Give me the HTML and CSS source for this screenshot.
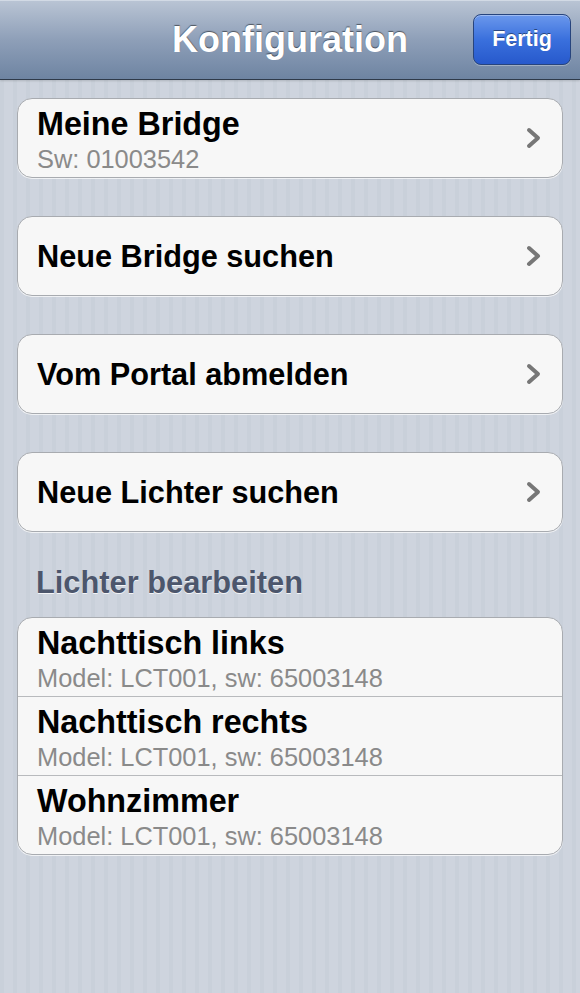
FILE: index.html
```html
<!DOCTYPE html>
<html lang="de">
  <head>
    <meta charset="UTF-8" />
    <meta name="viewport" content="width=device-width, initial-scale=1.0" />
    <title>Konfiguration</title>
    <link rel="stylesheet" href="styles.css">
  </head>
  <body>

    <!-- Navigation bar -->
    <header class="navbar">
      <span></span>
      <h1 class="nav-title">Konfiguration</h1>
      <div class="nav-right">
        <button class="done-btn">Fertig</button>
      </div>
    </header>

    <main class="content">

      <div class="group">
        <div class="row">
          <div class="row-text">
            <div class="row-title">Meine Bridge</div>
            <div class="row-sub">Sw: 01003542</div>
          </div>
          <svg class="chevron" viewBox="0 0 16 22"><polyline points="3,3 12,11 3,19" /></svg>
        </div>
      </div>

      <div class="group">
        <div class="row">
          <div class="row-title single">Neue Bridge suchen</div>
          <svg class="chevron" viewBox="0 0 16 22"><polyline points="3,3 12,11 3,19" /></svg>
        </div>
      </div>

      <div class="group">
        <div class="row">
          <div class="row-title single">Vom Portal abmelden</div>
          <svg class="chevron" viewBox="0 0 16 22"><polyline points="3,3 12,11 3,19" /></svg>
        </div>
      </div>

      <div class="group">
        <div class="row">
          <div class="row-title single">Neue Lichter suchen</div>
          <svg class="chevron" viewBox="0 0 16 22"><polyline points="3,3 12,11 3,19" /></svg>
        </div>
      </div>

      <h2 class="section-header">Lichter bearbeiten</h2>

      <div class="group group-list">
        <div class="row">
          <div class="row-text">
            <div class="row-title">Nachttisch links</div>
            <div class="row-sub">Model: LCT001, sw: 65003148</div>
          </div>
        </div>
        <div class="row">
          <div class="row-text">
            <div class="row-title">Nachttisch rechts</div>
            <div class="row-sub">Model: LCT001, sw: 65003148</div>
          </div>
        </div>
        <div class="row">
          <div class="row-text">
            <div class="row-title">Wohnzimmer</div>
            <div class="row-sub">Model: LCT001, sw: 65003148</div>
          </div>
        </div>
      </div>

    </main>
  </body>
</html>
```

FILE: styles.css
```css
:root {
  --cell-bg: #f7f7f7;
  --cell-border: #a8abb0;
  --sub: #8a8a8a;
  --header: #4c566c;
}

* {
  box-sizing: border-box;
}

body {
  margin: 0;
  min-height: 100vh;
  font-family: "Liberation Sans", Arial, sans-serif;
  color: #000;
  background-color: #cbd2dc;
  background-image: repeating-linear-gradient(90deg, #c9d0da 0, #c9d0da 4px, #ced4de 4px, #ced4de 13px);
}

/* nav bar */
.navbar {
  height: 80px;
  display: grid;
  grid-template-columns: 1fr auto 1fr;
  align-items: center;
  background: linear-gradient(#b9c4d4, #8e9fb8 50%, #6e84a2);
  border-top: 1px solid #d2dae5;
  border-bottom: 1px solid #2f3a4a;
  box-shadow: 0 1px 2px rgba(0, 0, 0, 0.15);
}

.nav-title {
  margin: 0;
  font-size: 36px;
  font-weight: bold;
  color: #fff;
  text-shadow: 0 -1px 1px rgba(0, 0, 0, 0.5);
}

.nav-right {
  display: flex;
  justify-content: flex-end;
  padding-right: 9px;
}

.done-btn {
  width: 98px;
  height: 51px;
  margin-top: -2px;
  border: 1px solid #27447d;
  border-radius: 8px;
  background: linear-gradient(#6b98ec, #3a70dd 50%, #2759cc);
  box-shadow: inset 0 1px 0 rgba(255, 255, 255, 0.35), 0 1px 0 rgba(255, 255, 255, 0.3);
  color: #fff;
  font-family: "Liberation Sans", Arial, sans-serif;
  font-size: 21.5px;
  font-weight: bold;
  text-shadow: 0 -1px 0 rgba(0, 0, 0, 0.45);
  padding: 0;
}

/* grouped table */
.content {
  padding: 18px 17px 40px;
}

.group {
  background: var(--cell-bg);
  border: 1px solid var(--cell-border);
  border-radius: 15px;
  box-shadow: 0 1px 0 rgba(255, 255, 255, 0.7);
  margin-bottom: 38px;
  overflow: hidden;
}

.row {
  height: 78px;
  display: flex;
  align-items: center;
  justify-content: space-between;
  padding: 0 20px 0 19px;
}

.group-list .row + .row {
  border-top: 1px solid #b8babd;
  height: 79px;
}

.row-text {
  align-self: flex-start;
  padding-top: 7px;
}

.row-title {
  font-size: 32.3px;
  font-weight: bold;
  line-height: 36px;
}

.row-title.single {
  font-size: 30.7px;
  padding-top: 1px;
}

.row-sub {
  font-size: 25.4px;
  line-height: 34px;
  color: var(--sub);
}

.chevron {
  width: 16px;
  height: 22px;
  fill: none;
  stroke: #777;
  stroke-width: 4;
  stroke-linecap: round;
  stroke-linejoin: round;
}

.section-header {
  margin: -4px 0 17px 19px;
  font-size: 30.8px;
  line-height: 34px;
  font-weight: bold;
  color: var(--header);
  text-shadow: 0 1px 0 rgba(255, 255, 255, 0.8);
}
```
